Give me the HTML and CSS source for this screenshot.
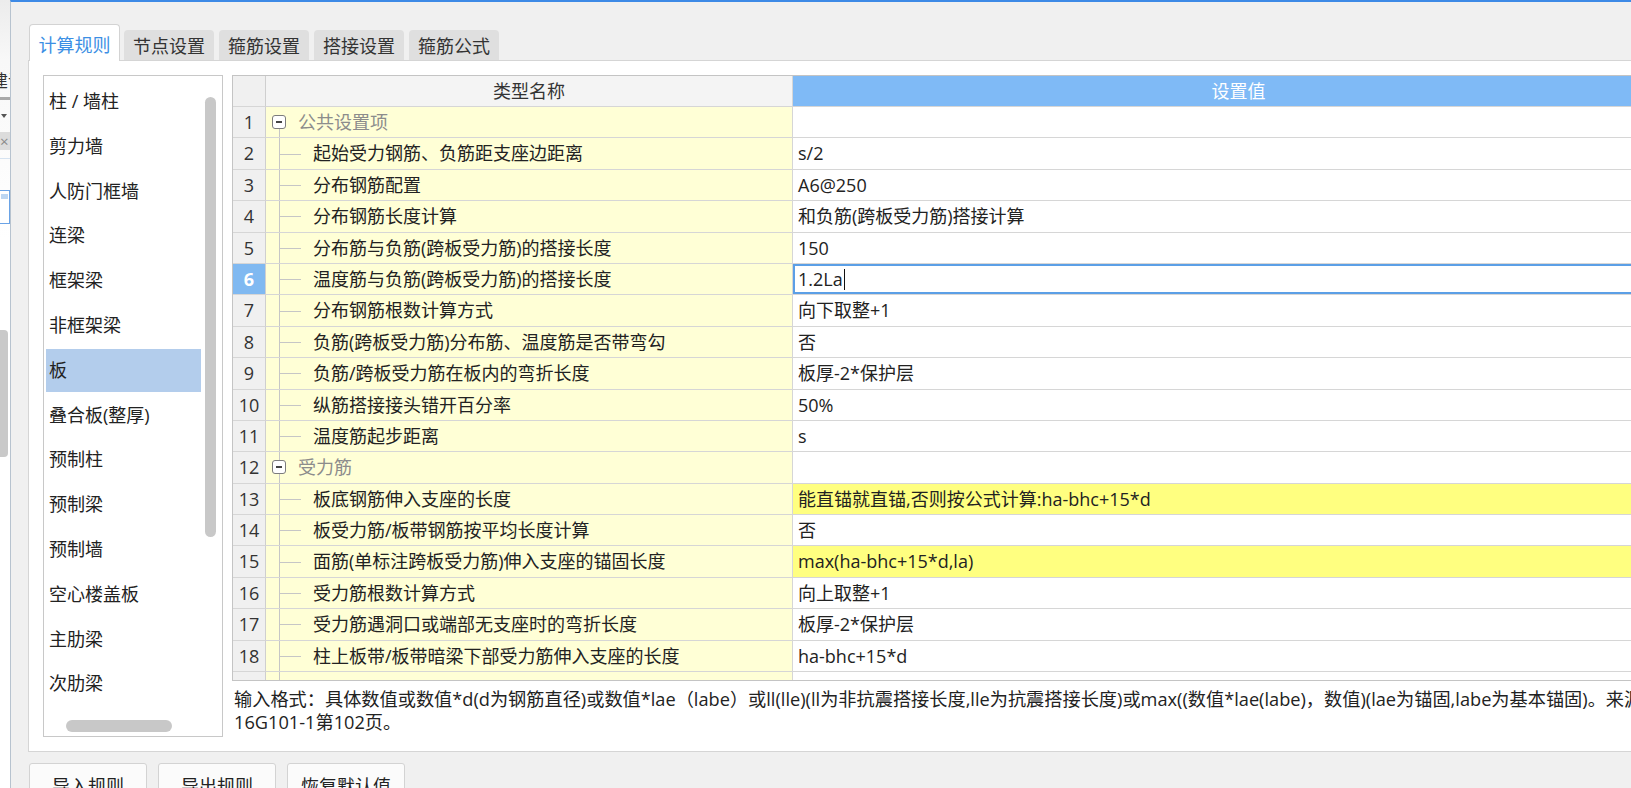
FILE: index.html
```html
<!DOCTYPE html>
<html lang="zh-CN">
<head>
<meta charset="utf-8">
<title>计算设置</title>
<link rel="stylesheet" href="styles.css">
</head>
<body>
<div class="screen">
  <div class="strip">
    <div class="s-char">建议</div>
    <div class="s-line"></div>
    <div class="s-arrow"></div>
    <div class="s-band">×</div>
    <div class="s-thin"></div>
    <div class="s-box"><span class="s-mini"></span></div>
    <div class="s-scroll"></div>
  </div>
  <div class="dialog">
    <div class="tabs">
      <div class="tab active">计算规则</div>
      <div class="tab">节点设置</div>
      <div class="tab">箍筋设置</div>
      <div class="tab">搭接设置</div>
      <div class="tab">箍筋公式</div>
    </div>
    <div class="panel">
      <div class="list">
        <div class="item">柱 / 墙柱</div>
        <div class="item">剪力墙</div>
        <div class="item">人防门框墙</div>
        <div class="item">连梁</div>
        <div class="item">框架梁</div>
        <div class="item">非框架梁</div>
        <div class="item selected">板</div>
        <div class="item">叠合板(整厚)</div>
        <div class="item">预制柱</div>
        <div class="item">预制梁</div>
        <div class="item">预制墙</div>
        <div class="item">空心楼盖板</div>
        <div class="item">主肋梁</div>
        <div class="item">次肋梁</div>
        <div class="vscroll"></div>
        <div class="hscroll"></div>
      </div>
      <div class="right">
        <div class="grid">
          <div class="row head">
            <div class="cell num"></div>
            <div class="cell name">类型名称</div>
            <div class="cell val">设置值</div>
          </div>
          <div class="row">
            <div class="cell num">1</div>
            <div class="cell name group first"><span class="box"></span><span class="gtxt">公共设置项</span></div>
            <div class="cell val"></div>
          </div>
          <div class="row">
            <div class="cell num">2</div>
            <div class="cell name child">起始受力钢筋、负筋距支座边距离</div>
            <div class="cell val">s/2</div>
          </div>
          <div class="row">
            <div class="cell num">3</div>
            <div class="cell name child">分布钢筋配置</div>
            <div class="cell val">A6@250</div>
          </div>
          <div class="row">
            <div class="cell num">4</div>
            <div class="cell name child">分布钢筋长度计算</div>
            <div class="cell val">和负筋(跨板受力筋)搭接计算</div>
          </div>
          <div class="row">
            <div class="cell num">5</div>
            <div class="cell name child">分布筋与负筋(跨板受力筋)的搭接长度</div>
            <div class="cell val">150</div>
          </div>
          <div class="row current">
            <div class="cell num">6</div>
            <div class="cell name child">温度筋与负筋(跨板受力筋)的搭接长度</div>
            <div class="cell val edit">1.2La<span class="caret"></span></div>
          </div>
          <div class="row">
            <div class="cell num">7</div>
            <div class="cell name child">分布钢筋根数计算方式</div>
            <div class="cell val">向下取整+1</div>
          </div>
          <div class="row">
            <div class="cell num">8</div>
            <div class="cell name child">负筋(跨板受力筋)分布筋、温度筋是否带弯勾</div>
            <div class="cell val">否</div>
          </div>
          <div class="row">
            <div class="cell num">9</div>
            <div class="cell name child">负筋/跨板受力筋在板内的弯折长度</div>
            <div class="cell val">板厚-2*保护层</div>
          </div>
          <div class="row">
            <div class="cell num">10</div>
            <div class="cell name child">纵筋搭接接头错开百分率</div>
            <div class="cell val">50%</div>
          </div>
          <div class="row">
            <div class="cell num">11</div>
            <div class="cell name child">温度筋起步距离</div>
            <div class="cell val">s</div>
          </div>
          <div class="row">
            <div class="cell num">12</div>
            <div class="cell name group"><span class="box"></span><span class="gtxt">受力筋</span></div>
            <div class="cell val"></div>
          </div>
          <div class="row">
            <div class="cell num">13</div>
            <div class="cell name child">板底钢筋伸入支座的长度</div>
            <div class="cell val hl">能直锚就直锚,否则按公式计算:ha-bhc+15*d</div>
          </div>
          <div class="row">
            <div class="cell num">14</div>
            <div class="cell name child">板受力筋/板带钢筋按平均长度计算</div>
            <div class="cell val">否</div>
          </div>
          <div class="row">
            <div class="cell num">15</div>
            <div class="cell name child">面筋(单标注跨板受力筋)伸入支座的锚固长度</div>
            <div class="cell val hl">max(ha-bhc+15*d,la)</div>
          </div>
          <div class="row">
            <div class="cell num">16</div>
            <div class="cell name child">受力筋根数计算方式</div>
            <div class="cell val">向上取整+1</div>
          </div>
          <div class="row">
            <div class="cell num">17</div>
            <div class="cell name child">受力筋遇洞口或端部无支座时的弯折长度</div>
            <div class="cell val">板厚-2*保护层</div>
          </div>
          <div class="row">
            <div class="cell num">18</div>
            <div class="cell name child">柱上板带/板带暗梁下部受力筋伸入支座的长度</div>
            <div class="cell val">ha-bhc+15*d</div>
          </div>
          <div class="row">
            <div class="cell num"></div>
            <div class="cell name child"></div>
            <div class="cell val"></div>
          </div>
        </div>
        <div class="help">输入格式：具体数值或数值*d(d为钢筋直径)或数值*lae（labe）或ll(lle)(ll为非抗震搭接长度,lle为抗震搭接长度)或max((数值*lae(labe)，数值)(lae为锚固,labe为基本锚固)。来源<br>16G101-1第102页。</div>
      </div>
    </div>
    <div class="buttons">
      <div class="btn">导入规则</div>
      <div class="btn">导出规则</div>
      <div class="btn">恢复默认值</div>
    </div>
  </div>
</div>
</body>
</html>
```

FILE: styles.css
```css
* { box-sizing: border-box; }
html, body { margin: 0; padding: 0; }
body {
  font-family: "Open Sans", "Noto Sans CJK SC", sans-serif;
  font-size: 18px;
  color: #222;
  background: #f0f0f0;
}
.screen {
  display: flex;
  width: 1631px;
  height: 788px;
  overflow: hidden;
}

/* left fragment of the window behind */
.strip {
  width: 10px;
  flex: none;
  height: 788px;
  background: linear-gradient(#ececec, #f8f8f8 60px, #ffffff 240px);
  display: flex;
  flex-direction: column;
  overflow: hidden;
}
.s-char {
  margin-top: 70px;
  margin-left: -9px;
  height: 22px;
  line-height: 22px;
  font-size: 17px;
  white-space: nowrap;
  color: #333;
}
.s-line { margin-top: 5px; height: 3px; background: #a9a9a9; }
.s-arrow {
  margin-top: 14px;
  margin-left: 1px;
  width: 0; height: 0;
  border-left: 3px solid transparent;
  border-right: 3px solid transparent;
  border-top: 4px solid #555;
}
.s-band {
  margin-top: 14px;
  height: 18px;
  background: #dcdcdc;
  color: #8a8a8a;
  font-size: 15px;
  line-height: 18px;
  padding-left: 0;
}
.s-thin { margin-top: 8px; height: 1px; background: #d6e3f1; }
.s-box {
  margin-top: 31px;
  height: 34px;
  border: 1px solid #6aa3e6;
  border-left: none;
  background: #fff;
  position: relative;
}
.s-mini {
  position: absolute;
  top: 3px; left: 1px;
  width: 7px; height: 5px;
  background: #bcd6f2;
}
.s-scroll {
  margin-top: 106px;
  width: 8px;
  height: 127px;
  border-radius: 0 4px 4px 0;
  background: #c9c9c9;
}

/* dialog */
.dialog {
  flex: 1;
  min-width: 0;
  border-top: 2px solid #3d8ae6;
  border-left: 1px solid #b7c3cf;
  background: #f0f0f0;
  padding: 22px 0 0 17px;
  overflow: hidden;
}
.tabs {
  display: flex;
  align-items: flex-end;
  margin-left: 1px;
  height: 36px;
}
.tab {
  width: 90px;
  height: 30px;
  margin-right: 5px;
  padding-top: 3px;
  background: #dfdfdf;
  border-radius: 4px 4px 0 0;
  color: #333;
  font-size: 18px;
  text-align: center;
  line-height: 26px;
}
.tab.active {
  width: 91px;
  height: 37px;
  margin-right: 4px;
  margin-bottom: -1px;
  padding-top: 7px;
  background: #fff;
  border: 1px solid #d3d3d3;
  border-bottom: none;
  color: #3c8fe4;
  position: relative;
  z-index: 1;
}

.panel {
  width: 1672px;
  height: 692px;
  background: #fff;
  border: 1px solid #d5d5d5;
  padding: 14px 14px 0 14px;
  display: flex;
  gap: 9px;
  align-items: flex-start;
}

.list {
  width: 180px;
  height: 662px;
  flex: none;
  border: 1px solid #c8c8c8;
  padding-top: 4px;
  position: relative;
  overflow: hidden;
}
.item {
  height: 42.8px;
  margin: 0 0 2px 2px;
  width: 155px;
  padding-left: 3px;
  line-height: 42.8px;
  font-size: 18px;
  color: #222;
  white-space: nowrap;
}
.item.selected { background: #b3cdec; }
.vscroll {
  position: absolute;
  left: 161px;
  top: 21px;
  width: 11px;
  height: 440px;
  border-radius: 6px;
  background: #c8c8c8;
}
.hscroll {
  position: absolute;
  left: 22px;
  top: 644px;
  width: 106px;
  height: 12px;
  border-radius: 6px;
  background: #c8c8c8;
}

.right {
  flex: 1;
  min-width: 0;
  display: flex;
  flex-direction: column;
}
.grid {
  height: 606px;
  border: 1px solid #c4c4c4;
  border-right: none;
  overflow: hidden;
  background: #fff;
}
.row {
  display: grid;
  grid-template-columns: 33px 527px 1fr;
  height: 31.4px;
}
.row.head { height: 31px; }
.cell {
  border-right: 1px solid #d6d6d6;
  border-bottom: 1px solid #d6d6d6;
  line-height: 30px;
  font-size: 18px;
  white-space: nowrap;
  overflow: hidden;
}
.cell.num {
  background: #f0f0f0;
  text-align: center;
  color: #333;
  border-right-color: #cfcfcf;
}
.cell.name {
  background: #ffffd6;
  position: relative;
}
.cell.val {
  padding-left: 5px;
  background: #fff;
}
.cell.val.hl { background: #ffff80; }
.head .cell.name {
  background: #f4f4f4;
  text-align: center;
  color: #333;
}
.head .cell.val {
  background: #7fbaf6;
  color: #fff;
  text-align: center;
  padding-left: 0;
}
.current .cell.num {
  background: #80b9f1;
  color: #fff;
  font-weight: bold;
}
.cell.val.edit {
  box-shadow: inset 0 0 0 2px #5b9fe6;
}
.caret {
  display: inline-block;
  width: 1px;
  height: 21px;
  background: #111;
  vertical-align: -4px;
  margin-left: 1px;
}

.cell.name.child { padding-left: 47px; }
.cell.name.child::before {
  content: "";
  position: absolute;
  left: 13px;
  top: 0;
  bottom: 0;
  width: 1px;
  background: #c6c6c6;
}
.cell.name.child::after {
  content: "";
  position: absolute;
  left: 14px;
  top: 50%;
  width: 21px;
  height: 1px;
  background: #c6c6c6;
}
.cell.name.group {
  display: flex;
  align-items: center;
  padding-left: 6px;
}
.cell.name.group::after {
  content: "";
  position: absolute;
  left: 13px;
  top: calc(50% + 7px);
  bottom: 0;
  width: 1px;
  background: #c6c6c6;
}
.cell.name.group::before {
  content: "";
  position: absolute;
  left: 13px;
  top: 0;
  height: calc(50% - 7px);
  width: 1px;
  background: #c6c6c6;
}
.cell.name.group.first::before { display: none; }
.box {
  width: 14px;
  height: 14px;
  border: 1px solid #7c7c7c;
  border-radius: 3px;
  display: flex;
  align-items: center;
  justify-content: center;
  background: #fff;
  flex: none;
}
.box::before {
  content: "";
  width: 6px;
  height: 2px;
  background: #444;
}
.gtxt {
  margin-left: 12px;
  color: #8c8c8c;
}

.help {
  margin-top: 7px;
  padding-left: 2px;
  font-size: 18.2px;
  line-height: 23px;
  white-space: nowrap;
  color: #222;
}

.buttons {
  display: flex;
  gap: 11px;
  margin-top: 11px;
  margin-left: 1px;
}
.btn {
  width: 118px;
  height: 46px;
  background: #fbfbfb;
  border: 1px solid #d3d3d3;
  border-radius: 3px;
  text-align: center;
  line-height: 44px;
  font-size: 18px;
  color: #222;
}
```
